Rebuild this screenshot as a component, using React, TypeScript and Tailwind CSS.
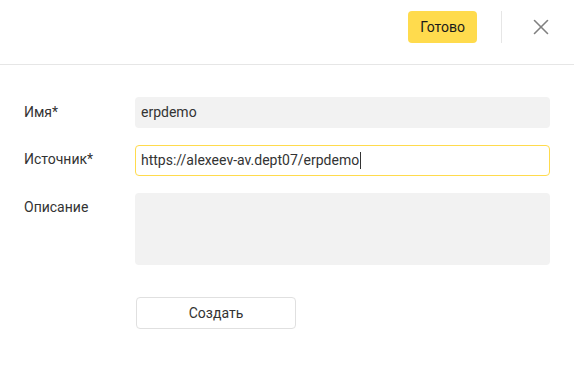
import { X } from 'lucide-react';

export default function App() {
  return (
    <div className="w-[574px] h-[389px] bg-white text-[#333] font-['Roboto',sans-serif] text-[14px]">
      {/* Header */}
      <div className="h-[65px] border-b border-[#e6e6e6] flex items-center justify-end pr-[20px]">
        <button className="h-[32px] px-[12px] rounded-[4px] bg-[#ffdb4d] text-[#1a1a1a] text-[14px] mt-[-10px]">
          Готово
        </button>
        <div className="w-px h-[32px] bg-[#e6e6e6] ml-[24px] mr-[26px] mt-[-10px]" />
        <X className="w-[26px] h-[26px] text-[#808080] mt-[-10px]" strokeWidth={1.5} />
      </div>

      {/* Form */}
      <div className="pl-[24px] pr-[24px] pt-[32px] flex flex-col gap-[17px]">
        <div className="flex items-start">
          <div className="w-[111px] pt-[5px]">Имя*</div>
          <div className="w-[415px] h-[31px] bg-[#f2f2f2] rounded-[4px] px-[6px] flex items-center">
            erpdemo
          </div>
        </div>
        <div className="flex items-start">
          <div className="w-[111px] pt-[4px]">Источник*</div>
          <div className="w-[415px] h-[31px] border border-[#ffdb4d] rounded-[4px] px-[5px] flex items-center">
            https://alexeev-av.dept07/erpdemo
            <span className="w-px h-[17px] bg-[#333] ml-[1px]" />
          </div>
        </div>
        <div className="flex items-start">
          <div className="w-[111px] pt-[4px]">Описание</div>
          <div className="w-[415px] h-[72px] bg-[#f2f2f2] rounded-[4px]" />
        </div>
        <div className="flex pt-[15px]">
          <div className="w-[112px]" />
          <button className="w-[160px] h-[32px] border border-[#e0e0e0] rounded-[4px] text-[#333]">
            Создать
          </button>
        </div>
      </div>
    </div>
  );
}
